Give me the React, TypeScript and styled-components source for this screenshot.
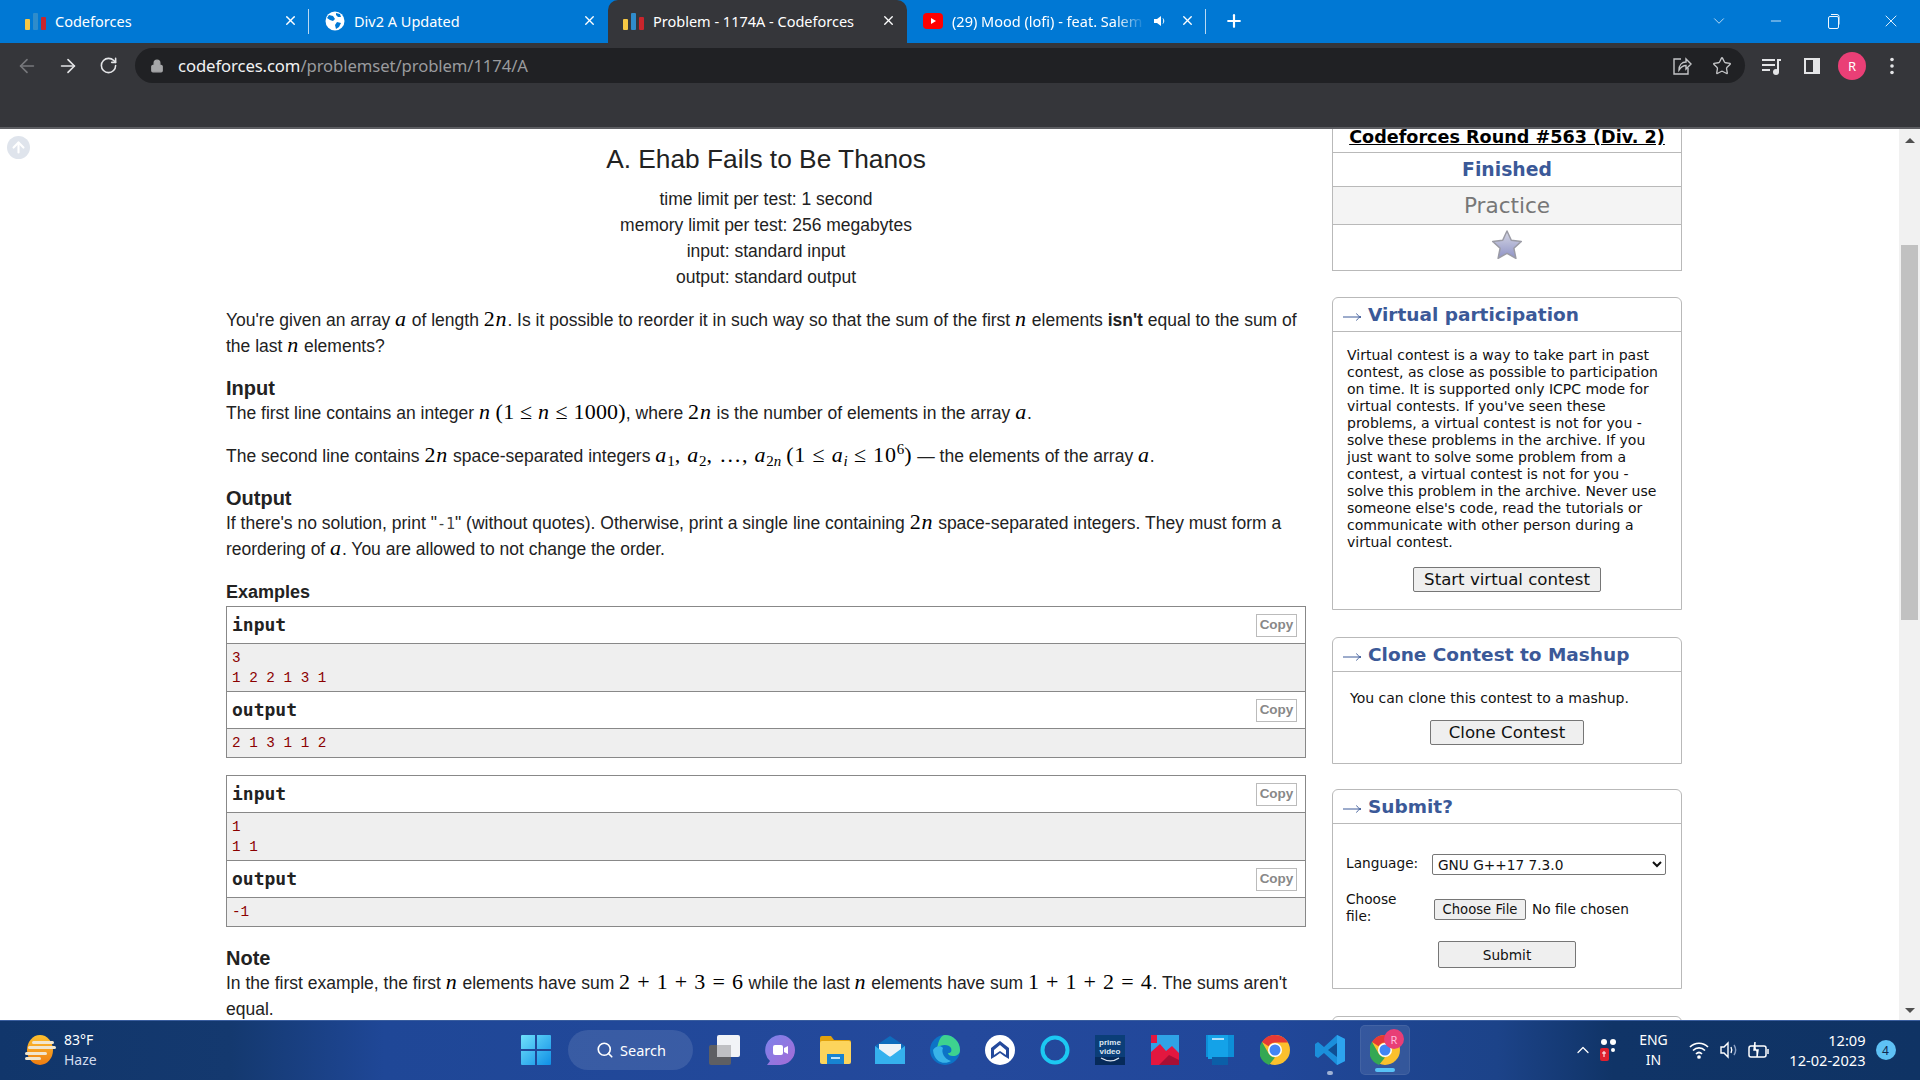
import React from 'react';
import styled, { createGlobalStyle } from 'styled-components';
import { ArrowLeft, ArrowRight, ArrowUp, RotateCw, Lock, Star, X, Plus, ChevronDown, Minus, Search, ChevronUp } from 'lucide-react';

const Global = createGlobalStyle`
  html, body { margin: 0; padding: 0; width: 1920px; height: 1080px; overflow: hidden; background: #fff; }
  * { box-sizing: border-box; }
`;

const Screen = styled.div`
  width: 1920px; height: 1080px; display: flex; flex-direction: column; overflow: hidden;
  font-family: "Liberation Sans", Arial, sans-serif;
`;

/* ---------- browser chrome ---------- */
const TabStrip = styled.div`
  height: 43px; background: #0078d4; display: flex; align-items: stretch; padding-left: 10px; padding-bottom: 2px; color: #fff;
  font-family: "Noto Sans", sans-serif; font-size: 14.5px; flex: none;
`;
const Tab = styled.div<{ $active?: boolean; $sep?: boolean }>`
  width: 299px; margin-bottom: ${p => (p.$active ? '-2px' : '0')}; padding-bottom: ${p => (p.$active ? '2px' : '0')};
  display: flex; align-items: center; padding-left: 15px; padding-right: 9px; gap: 8px; position: relative;
  background: ${p => (p.$active ? '#35363a' : 'transparent')};
  border-radius: ${p => (p.$active ? '10px 10px 0 0' : '0')};
  &::after {
    content: ''; display: ${p => (p.$sep ? 'block' : 'none')}; position: absolute; right: 0; top: 9px; bottom: 7px; width: 1px; background: #b9d9f2;
  }
`;
const TabIcon = styled.span`
  width: 22px; height: 22px; flex: none; display: flex; align-items: center; justify-content: center;
`;
const TabTitle = styled.span<{ $fade?: boolean }>`
  flex: 1; white-space: nowrap; overflow: hidden; min-width: 0;
  ${p => (p.$fade ? 'mask-image: linear-gradient(90deg, #000 85%, transparent 100%);' : '')}
`;
const TabClose = styled.span`
  width: 20px; flex: none; display: flex; justify-content: center; align-items: center;
`;
const NewTab = styled.span`
  margin-left: 18px; width: 20px; display: flex; align-items: center; justify-content: center;
`;
const WindowControls = styled.div`
  margin-left: auto; display: flex;
`;
const WindowControl = styled.span`
  width: 57.5px; display: flex; align-items: center; justify-content: center; color: #f2f8fd;
`;
const Toolbar = styled.div`
  height: 86px; background: #35363a; border-bottom: 2px solid #5d5e62; flex: none; display: flex; align-items: flex-start; padding: 5px 8px 0 6px;
`;
const NavButton = styled.span<{ $dim?: boolean }>`
  width: 41px; height: 35px; display: flex; align-items: center; justify-content: center; flex: none;
  color: ${p => (p.$dim ? '#77787c' : '#e4e5e7')};
`;
const AddressBar = styled.div`
  flex: 1; margin-left: 6px; height: 35px; border-radius: 18px; background: #202124; display: flex; align-items: center;
  padding: 0 13px 0 15px; color: #a6a7a9;
`;
const UrlText = styled.div`
  margin-left: 14px; font-family: "Noto Sans", sans-serif; font-size: 16.7px; color: #9a9b9e; flex: 1; letter-spacing: -0.1px;
`;
const UrlHost = styled.span`
  color: #f1f2f3;
`;
const AddressActions = styled.div`
  display: flex; gap: 20px; color: #c4c5c7;
`;
const ToolActions = styled.div`
  display: flex; margin-left: 7px;
`;
const ToolAction = styled.span`
  width: 40px; height: 35px; display: flex; align-items: center; justify-content: center; color: #e4e5e7;
`;
const Avatar = styled.span`
  width: 28px; height: 28px; border-radius: 50%; background: #ea3f76; color: #fff; display: flex; align-items: center; justify-content: center;
  font-family: "Noto Sans", sans-serif; font-size: 13px;
`;

/* ---------- page ---------- */
const Page = styled.div`
  flex: 1; display: flex; min-height: 0; overflow: hidden; background: #fff;
`;
const Gutter = styled.div`
  width: 226px; flex: none; padding: 7px 0 0 7px;
`;
const ScrollTop = styled.span`
  width: 23px; height: 23px; border-radius: 50%; background: #dfe4ec; display: flex; align-items: center; justify-content: center; color: #fff;
`;
const Main = styled.main`
  width: 1080px; flex: none; color: #222; font-size: 17.5px; line-height: 25.5px;
`;
const Title = styled.h1`
  margin: 15px 0 0; font-size: 26.3px; line-height: 30px; font-weight: 400; text-align: center;
`;
const Meta = styled.div`
  margin-top: 12px; text-align: center; line-height: 26px;
`;
const Para = styled.p<{ $gap?: number }>`
  margin: ${p => p.$gap ?? 17}px 0 0; width: 1080px;
`;
const LeadPara = styled(Para)`
  margin-top: 18px;
`;
const SectionTitle = styled.h2<{ $gap?: number }>`
  margin: ${p => p.$gap ?? 17}px 0 0; font-size: 20px; line-height: 25px; font-weight: 700;
`;
const ExamplesTitle = styled.h3`
  margin: 18px 0 2px; font-size: 18px; line-height: 24px; font-weight: 700;
`;
const V = styled.i`
  font-family: "Liberation Serif", serif; font-size: 22px; line-height: 1; letter-spacing: 0.8px; color: #000;
`;
const N = styled.span`
  font-family: "Liberation Serif", serif; font-size: 22px; line-height: 1; letter-spacing: 0.8px; color: #000;
`;
const TightN = styled(N)`
  letter-spacing: 0.2px;
`;
const Sub = styled.sub`
  font-family: "Liberation Serif", serif; font-size: 15px; line-height: 0; vertical-align: -4px; color: #000;
`;
const SubItalic = styled(Sub)`
  font-style: italic;
`;
const Sup = styled.sup`
  font-family: "Liberation Serif", serif; font-size: 15px; line-height: 0; vertical-align: 8px; color: #000;
`;
const Code = styled.code`
  font-family: "DejaVu Sans Mono", monospace; font-size: 15px; line-height: 1; color: #444;
`;
const SampleBox = styled.div<{ $gap?: number }>`
  margin-top: ${p => p.$gap ?? 0}px; width: 1080px; border: 1px solid #888;
`;
const SampleHead = styled.div<{ $h: number }>`
  height: ${p => p.$h}px; display: flex; align-items: center; justify-content: space-between; padding: 0 8px 0 5px; background: #fff;
  font-family: "DejaVu Sans Mono", monospace; font-weight: 700; font-size: 18px; color: #222;
  border-bottom: 1px solid #888;
`;
const CopyButton = styled.span`
  width: 41px; height: 23px; border: 1px solid #bbb; display: flex; align-items: center; justify-content: center;
  font-family: "Liberation Sans", sans-serif; font-size: 13.5px; font-weight: 700; color: #888;
`;
const SampleBody = styled.pre<{ $h: number; $last?: boolean }>`
  margin: 0; height: ${p => p.$h}px; background: #efefef; padding: 4px 0 0 5px;
  font-family: "Liberation Mono", monospace; font-size: 14.3px; line-height: 20px; color: #8b0000;
  border-bottom: ${p => (p.$last ? 'none' : '1px solid #888')};
`;

/* ---------- sidebar ---------- */
const Sidebar = styled.aside`
  width: 350px; margin-left: 26px; flex: none; font-family: "DejaVu Sans", sans-serif; color: #111;
`;
const RoundTable = styled.div`
  border: 1px solid #b9b9b9; border-top: none; text-align: center;
`;
const RoundName = styled.div`
  height: 24px; display: flex; align-items: flex-end; justify-content: center; font-weight: 700; font-size: 17.6px; color: #000; text-decoration: underline;
  border-bottom: 1px solid #b9b9b9; overflow: hidden; line-height: 25px; padding-bottom: 2px;
`;
const RoundState = styled.div`
  height: 34px; display: flex; align-items: center; justify-content: center; font-weight: 700; font-size: 18.8px; color: #3b5998;
  border-bottom: 1px solid #b9b9b9;
`;
const RoundPhase = styled.div`
  height: 38px; display: flex; align-items: center; justify-content: center; font-size: 21.6px; color: #777; background: #f4f4f4;
  border-bottom: 1px solid #b9b9b9;
`;
const RoundStar = styled.div`
  height: 45px; display: flex; align-items: flex-start; justify-content: center; padding-top: 4px;
`;
const Panel = styled.section<{ $gap: number; $h: number }>`
  margin-top: ${p => p.$gap}px; height: ${p => p.$h}px; border: 1px solid #b9b9b9; border-radius: 6px 6px 0 0;
`;
const PanelHead = styled.header`
  height: 34px; border-bottom: 1px solid #b9b9b9; display: flex; align-items: center; padding: 0 0 1px 10px; gap: 6px;
  font-weight: 700; font-size: 18.5px; color: #3b5998;
`;
const ArrowMark = styled.svg`
  flex: none; margin-top: 5px;
`;
const PanelText = styled.p`
  margin: 15px 0 0; padding: 0 10px 0 14px; font-size: 14px; line-height: 17px; white-space: nowrap;
`;
const PanelNote = styled(PanelText)`
  margin-top: 18px; padding-left: 17px;
`;
const CenterRow = styled.div<{ $gap: number }>`
  margin-top: ${p => p.$gap}px; display: flex; justify-content: center;
`;
const GreyButton = styled.button<{ $w: number }>`
  width: ${p => p.$w}px; height: 25px; padding: 0; background: #efefef; border: 1px solid #767676; border-radius: 2px;
  font-family: "DejaVu Sans", sans-serif; font-size: 16.6px; color: #111; display: flex; align-items: center; justify-content: center;
`;
const SubmitButton = styled(GreyButton)`
  height: 27px; font-size: 13.7px;
`;
const FormGrid = styled.div`
  margin-top: 30px; padding: 0 15px 0 13px; display: grid; grid-template-columns: 86px 1fr; row-gap: 16px; align-items: center;
  font-size: 13.7px; line-height: 17px;
`;
const FormLabel = styled.span`
  max-width: 64px; padding-bottom: 2px;
`;
const Select = styled.select`
  width: 234px; height: 21px; background: #fff; border: 1px solid #767676; border-radius: 2px; padding: 0 0 0 1px;
  font-family: "DejaVu Sans", sans-serif; font-size: 13.7px; color: #111;
`;
const FileRow = styled.div`
  display: flex; align-items: center; gap: 6px; padding-left: 2px;
`;
const FileButton = styled.button`
  width: 92px; height: 21px; padding: 0; background: #efefef; border: 1px solid #767676; border-radius: 2px;
  font-family: "DejaVu Sans", sans-serif; font-size: 13.2px; color: #111;
`;

/* ---------- scrollbar ---------- */
const Scrollbar = styled.div`
  margin-left: auto; width: 21px; flex: none; background: #f1f1f1; display: flex; flex-direction: column; align-items: center;
`;
const ScrollArrowUp = styled.span`
  margin-top: 9px; border: 5px solid transparent; border-top: none; border-bottom: 5px solid #505050;
`;
const ScrollThumb = styled.span`
  margin-top: 102px; width: 17px; height: 375px; background: #c1c1c1;
`;
const ScrollArrowDown = styled.span`
  margin-top: auto; margin-bottom: 7px; border: 5px solid transparent; border-bottom: none; border-top: 5px solid #505050;
`;

/* ---------- taskbar ---------- */
const Taskbar = styled.footer`
  height: 60px; flex: none; display: flex; align-items: center; color: #fff; box-shadow: inset 0 1px 0 #3a5e9f;
  background: linear-gradient(90deg, #11366b 0%, #14396f 12%, #1f4797 20%, #24499c 50%, #21479a 66%, #1c4389 78%, #103467 84%, #0f3364 100%);
  font-family: "Noto Sans", sans-serif;
`;
const Weather = styled.div`
  width: 508.5px; flex: none; display: flex; align-items: center; padding-left: 24px; gap: 8px;
`;
const WeatherText = styled.div`
  font-size: 14px; line-height: 20px;
`;
const WeatherSub = styled.div`
  color: #d2dcee;
`;
const Slot = styled.span<{ $active?: boolean }>`
  width: 55px; height: 50px; flex: none; display: flex; align-items: center; justify-content: center; position: relative;
  ${p => p.$active ? 'background: rgba(255,255,255,.1); border: 1px solid rgba(255,255,255,.07); border-radius: 5px; width: 50px; margin: 0 2.5px;' : ''}
`;
const RunDot = styled.span<{ $wide?: boolean }>`
  position: absolute; bottom: ${p => (p.$wide ? 2 : 0)}px; left: 50%; transform: translateX(-50%); height: 4px; border-radius: 2px;
  width: ${p => (p.$wide ? 20 : 6)}px; background: ${p => (p.$wide ? '#58c2f7' : '#9fb2d4')};
`;
const SearchPill = styled.div`
  width: 125px; height: 40px; margin: 0 4.5px; flex: none; border-radius: 20px; background: rgba(255,255,255,.11); display: flex; align-items: center;
  padding-left: 28px; gap: 6px; font-size: 14.5px;
`;
const Tray = styled.div`
  margin-left: 157px; display: flex; align-items: center; flex: 1;
`;
const TraySlot = styled.span<{ $w: number }>`
  width: ${p => p.$w}px; display: flex; align-items: center; justify-content: center; flex: none;
`;
const Lang = styled.div`
  width: 52px; margin: 0 5px 0 6px; text-align: center; font-size: 14px; line-height: 20px; flex: none;
`;
const Clock = styled.div`
  width: 92px; margin-left: 0; text-align: right; font-size: 14.6px; line-height: 20px; flex: none;
`;
const Badge = styled.span`
  width: 20px; height: 20px; margin-left: 10px; border-radius: 50%; background: #5ec1f5; color: #10284f; font-size: 12px; display: flex; align-items: center; justify-content: center; flex: none;
`;

/* ---------- drawings ---------- */
const HeadArrow = () => (
  <ArrowMark width="19" height="12" viewBox="0 0 19 12" fill="none" stroke="#3b5998" strokeWidth="1">
    <path d="M0 6h18M13.500 2.500c1 1.800 2.500 3 4.500 3.500c-2 .5-3.500 1.700-4.500 3.500" />
  </ArrowMark>
);
const CfLogo = () => (
  <svg width="22" height="18" viewBox="0 0 22 18">
    <rect x="0" y="7" width="5" height="11" rx="1" fill="#f6c844" />
    <rect x="8" y="1" width="5" height="17" rx="1" fill="#2f8ccb" />
    <rect x="16" y="5" width="5" height="13" rx="1" fill="#c9252c" />
  </svg>
);
const Globe = () => (
  <svg width="20" height="20" viewBox="0 0 20 20">
    <circle cx="10" cy="10" r="9.5" fill="#fff" />
    <path d="M4 4l4 1 2 3-2 2-3-1-3-2zM12 11l4 1-2 4-3 2-1-4zM11 2l4 1 1 3-3 0-2-2z" fill="#0078d4" />
  </svg>
);
const YouTube = () => (
  <svg width="20" height="16" viewBox="0 0 20 16">
    <rect width="20" height="16" rx="4" fill="#f00" />
    <path d="M8 5l5 3-5 3z" fill="#fff" />
  </svg>
);
const Speaker = () => (
  <svg width="16" height="16" viewBox="0 0 16 16" fill="#fff">
    <path d="M1 6h3l4-3v10l-4-3H1z" />
    <path d="M10 5.5c1 1.4 1 3.6 0 5" stroke="#fff" fill="none" />
  </svg>
);
const Share = () => (
  <svg width="20" height="20" viewBox="0 0 20 20" fill="none" stroke="currentColor" strokeWidth="1.4">
    <path d="M9 3H2v15h14v-6" />
    <path d="M7 14c0-5 3-8 7-8V3l5 5-5 5V9.500c-3 0-5 1.500-7 4.500z" />
  </svg>
);
const MediaIcon = () => (
  <svg width="22" height="20" viewBox="0 0 22 20" fill="currentColor">
    <rect x="1" y="3" width="13" height="2" /><rect x="1" y="8" width="13" height="2" /><rect x="1" y="13" width="8" height="2" />
    <rect x="16" y="3" width="2" height="13" /><rect x="16" y="3" width="4" height="2" /><circle cx="15" cy="16" r="3" />
  </svg>
);
const SideIcon = () => (
  <svg width="20" height="20" viewBox="0 0 20 20">
    <rect x="2" y="2" width="16" height="16" fill="#e4e5e7" />
    <rect x="4" y="4" width="7" height="12" fill="#35363a" />
  </svg>
);
const Kebab = () => (
  <svg width="4" height="18" viewBox="0 0 4 18" fill="currentColor">
    <circle cx="2" cy="2.500" r="1.800" /><circle cx="2" cy="9" r="1.800" /><circle cx="2" cy="15.500" r="1.800" />
  </svg>
);
const Restore = () => (
  <svg width="14" height="16" viewBox="0 0 14 16" fill="none" stroke="currentColor">
    <rect x="1.500" y="3.500" width="10" height="12" rx="1.500" /><path d="M4 1.500h6a2 2 0 0 1 2 2v8" />
  </svg>
);
const FavStar = () => (
  <svg width="32" height="32" viewBox="0 0 32 32">
    <defs>
      <linearGradient id="st" x1="0" y1="0" x2="0" y2="1">
        <stop offset="0" stopColor="#d6d7e4" /><stop offset="1" stopColor="#8f93c6" />
      </linearGradient>
    </defs>
    <path d="M16 2l4.300 9.200 10 1.200-7.400 6.900 2 10L16 24.300l-8.900 5 2-10-7.400-6.900 10-1.200z" fill="url(#st)" stroke="#9b9ba5" strokeWidth="1.500" strokeLinejoin="round" />
  </svg>
);
const WeatherIcon = () => (
  <svg width="32" height="32" viewBox="0 0 32 32">
    <defs>
      <linearGradient id="sun" x1="0" y1="0" x2="0" y2="1">
        <stop offset="0" stopColor="#fdc02f" /><stop offset="1" stopColor="#ef7d12" />
      </linearGradient>
    </defs>
    <ellipse cx="16" cy="16" rx="13" ry="15" fill="url(#sun)" />
    <g fill="#f1e6cf"><rect x="8" y="7" width="22" height="3" rx="1.500" /><rect x="4" y="12" width="28" height="3" rx="1.500" /><rect x="1" y="18" width="22" height="3" rx="1.500" /><rect x="1" y="23" width="16" height="3" rx="1.500" /></g>
  </svg>
);
const WinLogo = () => (
  <svg width="30" height="30" viewBox="0 0 30 30">
    <defs>
      <linearGradient id="win" x1="0" y1="0" x2="1" y2="1">
        <stop offset="0" stopColor="#6fe0fb" /><stop offset="1" stopColor="#0f8fe6" />
      </linearGradient>
    </defs>
    <path d="M0 1a1 1 0 0 1 1-1h13v14H0zM16 0h13a1 1 0 0 1 1 1v13H16zM0 16h14v14H1a1 1 0 0 1-1-1zM16 16h14v13a1 1 0 0 1-1 1H16z" fill="url(#win)" />
  </svg>
);
const TaskView = () => (
  <svg width="32" height="30" viewBox="0 0 32 30">
    <rect x="0" y="10" width="22" height="20" rx="2" fill="#5e5f63" />
    <rect x="8" y="0" width="23" height="22" rx="2" fill="#f1f3f7" />
    <rect x="8" y="10" width="14" height="12" fill="#bfc0c4" />
  </svg>
);
const Meet = () => (
  <svg width="30" height="30" viewBox="0 0 30 30">
    <defs><linearGradient id="mt" x1="0" y1="0" x2="1" y2="1"><stop offset="0" stopColor="#7b83eb" /><stop offset="1" stopColor="#a56bd6" /></linearGradient></defs>
    <path d="M15 0a15 15 0 0 1 0 30H2l3-4A15 15 0 0 1 15 0z" fill="url(#mt)" />
    <rect x="8" y="10" width="10" height="10" rx="2" fill="#fff" /><path d="M19 13l4-2v8l-4-2z" fill="#fff" />
  </svg>
);
const Folder = () => (
  <svg width="31" height="28" viewBox="0 0 31 28">
    <path d="M0 2a2 2 0 0 1 2-2h9l3 4h15a2 2 0 0 1 2 2v4H0z" fill="#e2a20d" />
    <rect x="0" y="5" width="31" height="23" rx="2" fill="#fcd45c" />
    <rect x="7" y="18" width="17" height="10" fill="#1783d2" /><rect x="11" y="21" width="9" height="2" fill="#bfe3fa" />
  </svg>
);
const Mail = () => (
  <svg width="30" height="28" viewBox="0 0 30 28">
    <path d="M15 0L0 10v18h30V10z" fill="#0f6cbd" />
    <path d="M4 8h22v9L15 21 4 17z" fill="#eef3f8" />
    <path d="M0 10l15 11L30 10v18H0z" fill="#35b1ee" />
  </svg>
);
const Edge = () => (
  <svg width="30" height="30" viewBox="0 0 30 30">
    <circle cx="15" cy="15" r="15" fill="#0c73c6" />
    <path d="M15 0a15 15 0 0 1 15 15c0 4-3 6-7 6-3 0-5-1-5-3 3 0 4-2 3-5-2-4-10-4-14 0C9 5 11 0 15 0z" fill="#3ed28f" />
    <path d="M3 15c2-4 8-5 10-2-2 4 1 11 8 13-6 4-17 2-18-11z" fill="#38b3e8" />
  </svg>
);
const HomeBadge = () => (
  <svg width="30" height="30" viewBox="0 0 30 30">
    <circle cx="15" cy="15" r="15" fill="#fff" />
    <path d="M15 6l9 7v11l-5-3-4-3-4 3-5 3V13z" fill="#244a9c" />
    <path d="M15 10l6 5v5l-6-4-6 4v-5z" fill="#fff" />
  </svg>
);
const Alexa = () => (
  <svg width="30" height="30" viewBox="0 0 30 30">
    <circle cx="15" cy="15" r="12.500" fill="none" stroke="#1cc8f2" strokeWidth="4" />
  </svg>
);
const Prime = () => (
  <svg width="30" height="30" viewBox="0 0 30 30">
    <rect width="30" height="30" fill="#0b3e78" />
    <rect y="22" width="30" height="8" fill="#062a5a" />
    <path d="M6 23c6 3.500 13 3.500 18 0" stroke="#dfe8f3" strokeWidth="1.200" fill="none" />
    <g fill="#dfe8f3" fontFamily="Liberation Sans, sans-serif" fontWeight="700" fontSize="8" textAnchor="middle">
      <text x="15" y="10">prime</text><text x="15" y="19">video</text>
    </g>
  </svg>
);
const Photos = () => (
  <svg width="28" height="30" viewBox="0 0 28 30">
    <rect width="28" height="30" fill="#2fa3e6" />
    <path d="M0 30V17l9-8 6 7 6-5 7 7v12z" fill="#e3173f" />
    <path d="M8 30l10-10 10 5v5z" fill="#a70f35" />
    <rect width="6" height="8" fill="#e3173f" />
  </svg>
);
const BlueBook = () => (
  <svg width="28" height="30" viewBox="0 0 28 30">
    <rect width="28" height="22" fill="#0d8fd8" />
    <rect x="2" y="0" width="20" height="24" fill="#14a2e8" />
    <rect x="6" y="22" width="16" height="8" fill="#0b5fa8" />
    <rect x="6" y="3" width="12" height="2" fill="#aee0fb" />
  </svg>
);
const ChromeIcon = () => (
  <svg width="30" height="30" viewBox="0 0 30 30">
    <circle cx="15" cy="15" r="15" fill="#fbc02d" />
    <path d="M15 0a15 15 0 0 1 13 7.500H15a7.500 7.500 0 0 0-6.500 3.800L2 7a15 15 0 0 1 13-7z" fill="#e53935" />
    <path d="M2 7l6.500 11.300A7.500 7.500 0 0 0 15 22.500L9 30A15 15 0 0 1 2 7z" fill="#34a853" />
    <circle cx="15" cy="15" r="7" fill="#fff" /><circle cx="15" cy="15" r="5.500" fill="#4285f4" />
  </svg>
);
const VsCode = () => (
  <svg width="32" height="32" viewBox="0 0 32 32">
    <path d="M23 1l8 4v22l-8 4-13-12-6 5-3-2V10l3-2 6 5z" fill="#1b8fdb" />
    <path d="M23 9v14l-9-7z" fill="#0f4f94" />
    <path d="M23 1l8 4v22l-8 4z" fill="#2da4ef" />
  </svg>
);
const ProfileDot = styled.span`
  position: absolute; top: 3px; right: 5px; width: 20px; height: 20px; border-radius: 50%; background: #e83e76; color: #fbd; font-size: 11px;
  display: flex; align-items: center; justify-content: center;
`;
const Wifi = () => (
  <svg width="20" height="18" viewBox="0 0 20 18" fill="none" stroke="#fff" strokeWidth="1.700">
    <path d="M1 6c5-5 13-5 18 0M4 9.500c3.500-3.500 8.500-3.500 12 0M7 13c2-2 4-2 6 0" /><circle cx="10" cy="16" r="1" fill="#fff" />
  </svg>
);
const Volume = () => (
  <svg width="20" height="18" viewBox="0 0 20 18" fill="none" stroke="#fff" strokeWidth="1.400">
    <path d="M2 6h3l4-4v14l-4-4H2z" /><path d="M12 6c1 2 1 4 0 6" /><path d="M15 4c2 3 2 7 0 10" stroke="#8ba0c4" />
  </svg>
);
const Battery = () => (
  <svg width="22" height="20" viewBox="0 0 22 20" fill="none" stroke="#fff" strokeWidth="1.500">
    <rect x="1" y="6" width="17" height="11" rx="2" /><path d="M20 9v5" /><path d="M7 2l-1 8h4l-1 7" fill="#fff" />
  </svg>
);
const TrayApp = () => (
  <svg width="20" height="24" viewBox="0 0 20 24">
    <circle cx="5" cy="4" r="3" fill="#fff" /><circle cx="14" cy="4" r="3" fill="#fff" /><circle cx="14" cy="12" r="2" fill="#fff" />
    <rect x="1" y="10" width="9" height="13" rx="2" fill="#e0202e" />
    <path d="M3 15h4M5 13v6" stroke="#fff" />
  </svg>
);

const Sample = ({ input, output, gap }: { input: string; output: string; gap?: number }) => {
  const inputLines = input.split('\n').length;
  return (
    <SampleBox $gap={gap}>
      <SampleHead $h={37}>input<CopyButton>Copy</CopyButton></SampleHead>
      <SampleBody $h={inputLines * 20 + 8}>{input}</SampleBody>
      <SampleHead $h={37}>output<CopyButton>Copy</CopyButton></SampleHead>
      <SampleBody $h={28} $last>{output}</SampleBody>
    </SampleBox>
  );
};

export default function App() {
  return (
    <Screen>
      <Global />
      <TabStrip>
        <Tab $sep>
          <TabIcon><CfLogo /></TabIcon><TabTitle>Codeforces</TabTitle><TabClose><X size={15} strokeWidth={2.2} /></TabClose>
        </Tab>
        <Tab>
          <TabIcon><Globe /></TabIcon><TabTitle>Div2 A Updated</TabTitle><TabClose><X size={15} strokeWidth={2.2} /></TabClose>
        </Tab>
        <Tab $active>
          <TabIcon><CfLogo /></TabIcon><TabTitle>Problem - 1174A - Codeforces</TabTitle><TabClose><X size={15} strokeWidth={2.2} /></TabClose>
        </Tab>
        <Tab $sep>
          <TabIcon><YouTube /></TabIcon><TabTitle $fade>(29) Mood (lofi) - feat. Salem</TabTitle><Speaker /><TabClose><X size={15} strokeWidth={2.2} /></TabClose>
        </Tab>
        <NewTab><Plus size={20} strokeWidth={2.6} /></NewTab>
        <WindowControls>
          <WindowControl><ChevronDown size={18} strokeWidth={1} /></WindowControl>
          <WindowControl><Minus size={16} strokeWidth={1.2} /></WindowControl>
          <WindowControl><Restore /></WindowControl>
          <WindowControl><X size={20} strokeWidth={1.1} /></WindowControl>
        </WindowControls>
      </TabStrip>
      <Toolbar>
        <NavButton $dim><ArrowLeft size={22} strokeWidth={1.8} /></NavButton>
        <NavButton><ArrowRight size={22} strokeWidth={1.8} /></NavButton>
        <NavButton><RotateCw size={19} strokeWidth={2} /></NavButton>
        <AddressBar>
          <Lock size={14} fill="currentColor" strokeWidth={2} />
          <UrlText><UrlHost>codeforces.com</UrlHost>/problemset/problem/1174/A</UrlText>
          <AddressActions><Share /><Star size={20} strokeWidth={1.6} /></AddressActions>
        </AddressBar>
        <ToolActions>
          <ToolAction><MediaIcon /></ToolAction>
          <ToolAction><SideIcon /></ToolAction>
          <ToolAction><Avatar>R</Avatar></ToolAction>
          <ToolAction><Kebab /></ToolAction>
        </ToolActions>
      </Toolbar>

      <Page>
        <Gutter><ScrollTop><ArrowUp size={17} strokeWidth={3} /></ScrollTop></Gutter>
        <Main>
          <Title>A. Ehab Fails to Be Thanos</Title>
          <Meta>
            <div>time limit per test: 1 second</div>
            <div>memory limit per test: 256 megabytes</div>
            <div>input: standard input</div>
            <div>output: standard output</div>
          </Meta>
          <LeadPara>You're given an array <V>a</V> of length <N>2</N><V>n</V>. Is it possible to reorder it in such way so that the sum of the first <V>n</V> elements <b>isn't</b> equal to the sum of the last <V>n</V> elements?</LeadPara>
          <SectionTitle>Input</SectionTitle>
          <Para $gap={0}>The first line contains an integer <V>n</V> <TightN>(1 ≤ </TightN><V>n</V><TightN> ≤ 1000)</TightN>, where <N>2</N><V>n</V> is the number of elements in the array <V>a</V>.</Para>
          <Para>The second line contains <N>2</N><V>n</V> space-separated integers <V>a</V><Sub>1</Sub><N>, </N><V>a</V><Sub>2</Sub><N>, …, </N><V>a</V><Sub>2</Sub><SubItalic>n</SubItalic> <N>(1 ≤ </N><V>a</V><SubItalic>i</SubItalic><N> ≤ 10</N><Sup>6</Sup><N>)</N> — the elements of the array <V>a</V>.</Para>
          <SectionTitle>Output</SectionTitle>
          <Para $gap={0}>If there's no solution, print "<Code>-1</Code>" (without quotes). Otherwise, print a single line containing <N>2</N><V>n</V> space-separated integers. They must form a reordering of <V>a</V>. You are allowed to not change the order.</Para>
          <ExamplesTitle>Examples</ExamplesTitle>
          <Sample input={'3\n1 2 2 1 3 1'} output="2 1 3 1 1 2" />
          <Sample gap={17} input={'1\n1 1'} output="-1" />
          <SectionTitle $gap={19}>Note</SectionTitle>
          <Para $gap={0}>In the first example, the first <V>n</V> elements have sum <N>2 + 1 + 3 = 6</N> while the last <V>n</V> elements have sum <N>1 + 1 + 2 = 4</N>. The sums aren't equal.</Para>
        </Main>
        <Sidebar>
          <RoundTable>
            <RoundName>Codeforces Round #563 (Div. 2)</RoundName>
            <RoundState>Finished</RoundState>
            <RoundPhase>Practice</RoundPhase>
            <RoundStar><FavStar /></RoundStar>
          </RoundTable>
          <Panel $gap={26} $h={313}>
            <PanelHead><HeadArrow />Virtual participation</PanelHead>
            <PanelText>
              Virtual contest is a way to take part in past<br />
              contest, as close as possible to participation<br />
              on time. It is supported only ICPC mode for<br />
              virtual contests. If you've seen these<br />
              problems, a virtual contest is not for you -<br />
              solve these problems in the archive. If you<br />
              just want to solve some problem from a<br />
              contest, a virtual contest is not for you -<br />
              solve this problem in the archive. Never use<br />
              someone else's code, read the tutorials or<br />
              communicate with other person during a<br />
              virtual contest.
            </PanelText>
            <CenterRow $gap={16}><GreyButton $w={188}>Start virtual contest</GreyButton></CenterRow>
          </Panel>
          <Panel $gap={27} $h={127}>
            <PanelHead><HeadArrow />Clone Contest to Mashup</PanelHead>
            <PanelNote>You can clone this contest to a mashup.</PanelNote>
            <CenterRow $gap={13}><GreyButton $w={154}>Clone Contest</GreyButton></CenterRow>
          </Panel>
          <Panel $gap={25} $h={200}>
            <PanelHead><HeadArrow />Submit?</PanelHead>
            <FormGrid>
              <FormLabel>Language:</FormLabel>
              <Select defaultValue="GNU G++17 7.3.0"><option>GNU G++17 7.3.0</option></Select>
              <FormLabel>Choose file:</FormLabel>
              <FileRow><FileButton>Choose File</FileButton><span>No file chosen</span></FileRow>
            </FormGrid>
            <CenterRow $gap={14}><SubmitButton $w={138}>Submit</SubmitButton></CenterRow>
          </Panel>
          <Panel $gap={27} $h={60} />
        </Sidebar>
        <Scrollbar>
          <ScrollArrowUp />
          <ScrollThumb />
          <ScrollArrowDown />
        </Scrollbar>
      </Page>

      <Taskbar>
        <Weather>
          <WeatherIcon />
          <WeatherText>83°F<WeatherSub>Haze</WeatherSub></WeatherText>
        </Weather>
        <Slot><WinLogo /></Slot>
        <SearchPill><Search size={18} strokeWidth={2.2} />Search</SearchPill>
        <Slot><TaskView /></Slot>
        <Slot><Meet /></Slot>
        <Slot><Folder /></Slot>
        <Slot><Mail /></Slot>
        <Slot><Edge /></Slot>
        <Slot><HomeBadge /></Slot>
        <Slot><Alexa /></Slot>
        <Slot><Prime /></Slot>
        <Slot><Photos /></Slot>
        <Slot><BlueBook /></Slot>
        <Slot><ChromeIcon /></Slot>
        <Slot><VsCode /><RunDot /></Slot>
        <Slot $active><ChromeIcon /><ProfileDot>R</ProfileDot><RunDot $wide /></Slot>
        <Tray>
          <TraySlot $w={26}><ChevronUp size={20} strokeWidth={1.5} /></TraySlot>
          <TraySlot $w={26}><TrayApp /></TraySlot>
          <Lang>ENG<br />IN</Lang>
          <TraySlot $w={29}><Wifi /></TraySlot>
          <TraySlot $w={30}><Volume /></TraySlot>
          <TraySlot $w={30}><Battery /></TraySlot>
          <Clock>12:09<br />12-02-2023</Clock>
          <Badge>4</Badge>
        </Tray>
      </Taskbar>
    </Screen>
  );
}
